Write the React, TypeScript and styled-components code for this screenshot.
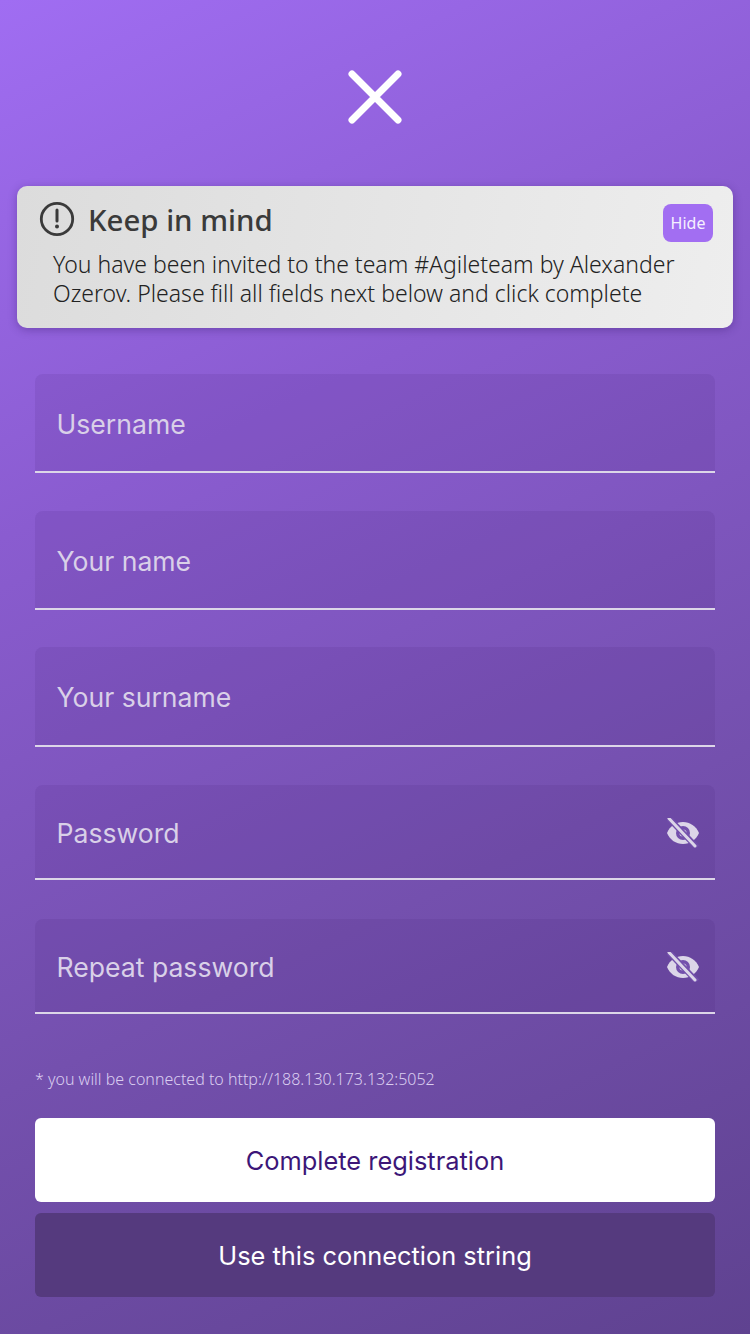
import React from 'react';
import styled, { createGlobalStyle } from 'styled-components';

const GlobalStyle = createGlobalStyle`
  html, body {
    margin: 0;
    padding: 0;
  }

  * {
    box-sizing: border-box;
  }
`;

const Screen = styled.div`
  width: 750px;
  height: 1334px;
  overflow: hidden;
  display: flex;
  flex-direction: column;
  background: linear-gradient(155deg, #a06df2 0%, #8a5cd0 32%, #7450ae 65%, #5f4290 100%);
  font-family: Inter, "Liberation Sans", sans-serif;
`;

const CloseButton = styled.div`
  display: flex;
  justify-content: center;
  padding-top: 69px;
  height: 186px;
`;

const Notice = styled.section`
  position: relative;
  width: 716px;
  height: 142px;
  margin: 0 17px;
  padding: 14px 22px 0 22px;
  border-radius: 10px;
  background: linear-gradient(100deg, #dcdcdc 0%, #eeeeee 100%);
  box-shadow: 0 2px 8px rgba(50, 20, 100, 0.35);
  font-family: "Noto Sans", "Open Sans", sans-serif;
`;

const NoticeHead = styled.div`
  display: flex;
  align-items: center;
  gap: 13px;
  height: 38px;
`;

const NoticeTitle = styled.h2`
  margin: 2px 0 0;
  font-size: 29.4px;
  font-weight: 500;
  line-height: 38px;
  color: #3a3a3a;
`;

const NoticeText = styled.p`
  margin: 12px 0 0 14px;
  font-size: 23px;
  font-weight: 300;
  line-height: 29px;
  color: #222222;
`;

const HideButton = styled.button`
  position: absolute;
  top: 18px;
  right: 20px;
  width: 50px;
  height: 38px;
  padding: 0;
  border: 0;
  border-radius: 8px;
  background: #a26ef2;
  color: #f5f0ff;
  font-family: "Noto Sans", sans-serif;
  font-size: 16px;
`;

const Form = styled.form`
  display: flex;
  flex-direction: column;
  padding: 46px 35px 0;
`;

const Field = styled.div<{ $height: number; $gap: number }>`
  display: flex;
  align-items: center;
  justify-content: space-between;
  height: ${({ $height }) => $height}px;
  margin-bottom: ${({ $gap }) => $gap}px;
  padding: 2px 15px 0 21.5px;
  border-radius: 8px 8px 0 0;
  border-bottom: 2px solid #dcd6e8;
  background: rgba(60, 30, 110, 0.11);
`;

const Placeholder = styled.span`
  font-size: 26.6px;
  font-weight: 400;
  color: #d9d0e8;
`;

const Hint = styled.p`
  margin: 52px 0 0;
  font-family: "Noto Sans", sans-serif;
  font-size: 16px;
  font-weight: 300;
  line-height: 26px;
  color: #dacdf0;
`;

const Actions = styled.div`
  display: flex;
  flex-direction: column;
  gap: 11px;
  margin-top: 26px;
`;

const Action = styled.button<{ $primary?: boolean }>`
  height: 84px;
  padding: 0;
  border: 0;
  border-radius: 6px;
  background: ${({ $primary }) => ($primary ? '#ffffff' : '#553a7e')};
  color: ${({ $primary }) => ($primary ? '#3c1678' : '#ffffff')};
  font-family: Inter, "Liberation Sans", sans-serif;
  font-size: 25.4px;
  font-weight: 400;
`;

const CloseIcon = () => (
  <svg width="56" height="56" viewBox="0 0 56 56" fill="none">
    <path d="M5 5L51 51M51 5L5 51" stroke="#fff" strokeWidth="7" strokeLinecap="round" />
  </svg>
);

const AlertIcon = () => (
  <svg width="36" height="36" viewBox="0 0 36 36" fill="none">
    <circle cx="18" cy="18" r="15.7" stroke="#3a3a3a" strokeWidth="2.8" />
    <path d="M18 9v11" stroke="#3a3a3a" strokeWidth="3" strokeLinecap="round" />
    <circle cx="18" cy="25.5" r="2" fill="#3a3a3a" />
  </svg>
);

const EyeOffIcon = () => (
  <svg width="34" height="30" viewBox="0 0 34 30">
    <path
      d="M1 15C4 8 10 4 17 4s13 4 16 11c-3 7-9 11-16 11S4 22 1 15Z"
      fill="#dcd6e8"
    />
    <circle cx="17" cy="15" r="7" fill="#7350ac" />
    <circle cx="17" cy="15" r="3.6" fill="#dcd6e8" />
    <path d="M3 0.5L31 29.5" stroke="#7350ac" strokeWidth="6" />
    <path d="M3 0.5L29 28" stroke="#dcd6e8" strokeWidth="3" strokeLinecap="round" />
  </svg>
);

const fields = [
  { label: 'Username', height: 99, gap: 38 },
  { label: 'Your name', height: 99, gap: 37 },
  { label: 'Your surname', height: 100, gap: 38 },
  { label: 'Password', height: 95, gap: 39 },
  { label: 'Repeat password', height: 95, gap: 0 },
];

const App: React.FC = () => (
  <Screen>
    <GlobalStyle />
    <CloseButton>
      <CloseIcon />
    </CloseButton>

    <Notice>
      <NoticeHead>
        <AlertIcon />
        <NoticeTitle>Keep in mind</NoticeTitle>
      </NoticeHead>
      <NoticeText>
        You have been invited to the team #Agileteam by Alexander Ozerov. Please fill all fields next below and click complete
      </NoticeText>
      <HideButton type="button">Hide</HideButton>
    </Notice>

    <Form>
      {fields.map(({ label, height, gap }) => (
        <Field key={label} $height={height} $gap={gap}>
          <Placeholder>{label}</Placeholder>
          {label.includes('assword') && <EyeOffIcon />}
        </Field>
      ))}
      <Hint>* you will be connected to http://188.130.173.132:5052</Hint>
      <Actions>
        <Action type="button" $primary>
          Complete registration
        </Action>
        <Action type="button">Use this connection string</Action>
      </Actions>
    </Form>
  </Screen>
);

export default App;
